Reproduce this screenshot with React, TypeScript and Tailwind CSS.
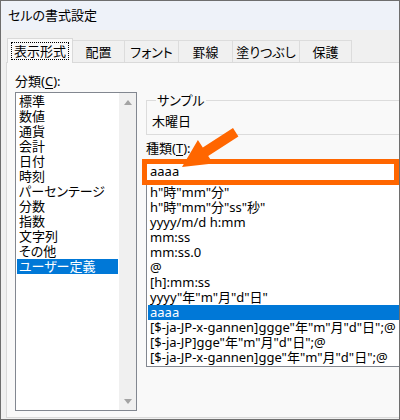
const categories = [
  "標準",
  "数値",
  "通貨",
  "会計",
  "日付",
  "時刻",
  "パーセンテージ",
  "分数",
  "指数",
  "文字列",
  "その他",
  "ユーザー定義",
];

const formats = [
  'h"時"mm"分"',
  'h"時"mm"分"ss"秒"',
  "yyyy/m/d h:mm",
  "mm:ss",
  "mm:ss.0",
  "@",
  "[h]:mm:ss",
  'yyyy"年"m"月"d"日"',
  "aaaa",
  '[$-ja-JP-x-gannen]ggge"年"m"月"d"日";@',
  '[$-ja-JP]gge"年"m"月"d"日";@',
  '[$-ja-JP-x-gannen]gge"年"m"月"d"日";@',
];

const tabs = [
  { label: "配置", w: "w-[52px]" },
  { label: "フォント", w: "w-[54px]" },
  { label: "罫線", w: "w-[54px]" },
  { label: "塗りつぶし", w: "w-[67px]" },
  { label: "保護", w: "w-[52px]" },
];

function Arrow() {
  return (
    <svg
      className="pointer-events-none absolute left-0 top-0"
      width="400"
      height="420"
      viewBox="0 0 400 420"
    >
      <polygon
        fill="#ff6600"
        points="181,166 212.1,162.5 207.2,155 237.4,135.4 232,127 201.8,146.6 196.9,139.1"
      />
    </svg>
  );
}

export default function App() {
  return (
    <div className="relative flex h-[420px] w-[400px] flex-col overflow-hidden border border-[#6e6e6e] bg-[#f0f0f0] font-['Noto_Sans','Noto_Sans_CJK_JP',sans-serif] text-[13px] text-black [font-feature-settings:'palt']">
      <div className="flex h-[29px] shrink-0 items-center bg-[#eef2f9] pl-[7px]">
        セルの書式設定
      </div>

      <div className="flex min-h-0 flex-1 flex-col pb-[1px] pl-[5px] pt-[8px]">
        {/* tabs */}
        <div className="relative z-10 -mb-px ml-[1px] flex h-[25px] items-start">
          <div className="flex h-[25px] w-[66px] justify-center border-x border-t border-[#d9d9d9] bg-[#f9f9f9] pt-[3px]">
            <span className="flex h-[18px] w-[58px] items-center justify-center border border-dotted border-black leading-none">
              表示形式
            </span>
          </div>
          {tabs.map((t) => (
            <div
              key={t.label}
              className={`${t.w} mt-[2px] flex h-[22px] items-center justify-center border-r border-t border-[#dcdcdc] bg-[#f0f0f0] pt-[1px] leading-none`}
            >
              {t.label}
            </div>
          ))}
        </div>

        {/* panel */}
        <div className="flex min-h-0 flex-1 border-y border-l border-[#dadada] bg-[#f9f9f9]">
          {/* category */}
          <div className="flex flex-col pl-[8px] pt-[11px]">
            <div className="leading-[15px]">
              分類(<span className="underline underline-offset-2">C</span>):
            </div>
            <div className="mt-[3px] flex h-[319px] w-[122px] border border-[#828790] bg-white">
              <div className="flex-1 p-[1px]">
                {categories.map((c, i) => (
                  <div
                    key={c}
                    className={
                      i === categories.length - 1
                        ? "h-[15px] bg-[#0078d7] pl-[2px] leading-[15px] text-white"
                        : "h-[15px] pl-[2px] leading-[15px]"
                    }
                  >
                    {c}
                  </div>
                ))}
              </div>
              <div className="flex w-[17px] flex-col items-center justify-between bg-[#f0f0f0] pb-[6px] pt-[7px]">
                <span className="h-0 w-0 border-x-[4px] border-b-[5px] border-x-transparent border-b-[#a3a3a3]" />
                <span className="h-0 w-0 border-x-[4px] border-t-[5px] border-x-transparent border-t-[#a3a3a3]" />
              </div>
            </div>
          </div>

          {/* format */}
          <div className="ml-[5px] flex w-[257px] shrink-0 flex-col pt-[30px]">
            <fieldset className="ml-[4px] w-[270px] border border-[#dcdcdc] pb-[5px] pl-[5px] pt-[6px]">
              <legend className="ml-[4px] px-[1px] leading-[15px]">サンプル</legend>
              <div className="leading-[15px]">木曜日</div>
            </fieldset>

            <div className="ml-[4px] mt-[6px] leading-[15px]">
              種類(<span className="underline underline-offset-2">T</span>):
            </div>

            <div className="mt-[2.5px] flex h-[26px] w-[257px] items-center border-[5px] border-[#ff6600] bg-white pl-[3px]">
              aaaa
            </div>

            <div className="ml-[4px] w-[270px] border-x border-b border-[#828790] bg-white px-[1px] pb-[1.5px]">
              {formats.map((f) => (
                <div
                  key={f}
                  className={
                    f === "aaaa"
                      ? "h-[15px] whitespace-nowrap bg-[#0078d7] pl-[2px] leading-[15px] text-white"
                      : "h-[15px] whitespace-nowrap pl-[2px] leading-[15px]"
                  }
                >
                  {f}
                </div>
              ))}
            </div>
          </div>
        </div>
      </div>

      <Arrow />
    </div>
  );
}
